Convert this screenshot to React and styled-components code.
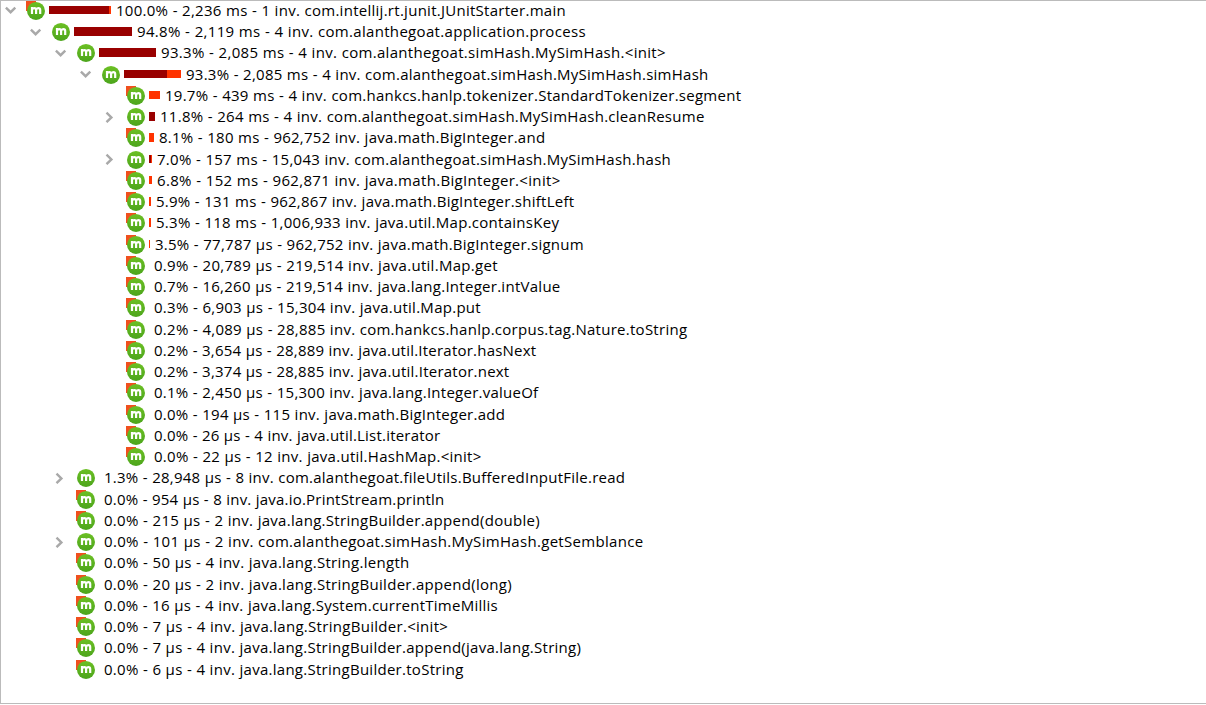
import React from 'react';
import styled, { createGlobalStyle } from 'styled-components';

const rows = [
  { depth: 0, arrow: 'open', flag: true, own: 60, native: 2, text: '100.0% - 2,236 ms - 1 inv. com.intellij.rt.junit.JUnitStarter.main' },
  { depth: 1, arrow: 'open', own: 58, tracking: 0.32, text: '94.8% - 2,119 ms - 4 inv. com.alanthegoat.application.process' },
  { depth: 2, arrow: 'open', own: 57, tracking: 0.31, text: '93.3% - 2,085 ms - 4 inv. com.alanthegoat.simHash.MySimHash.<init>' },
  { depth: 3, arrow: 'open', own: 43, native: 14, tracking: 0.25, text: '93.3% - 2,085 ms - 4 inv. com.alanthegoat.simHash.MySimHash.simHash' },
  { depth: 4, flag: true, native: 11, tracking: 0.26, text: '19.7% - 439 ms - 4 inv. com.hankcs.hanlp.tokenizer.StandardTokenizer.segment' },
  { depth: 4, arrow: 'closed', own: 6, text: '11.8% - 264 ms - 4 inv. com.alanthegoat.simHash.MySimHash.cleanResume' },
  { depth: 4, flag: true, native: 5, tracking: 0.25, text: '8.1% - 180 ms - 962,752 inv. java.math.BigInteger.and' },
  { depth: 4, arrow: 'closed', own: 2, native: 1, text: '7.0% - 157 ms - 15,043 inv. com.alanthegoat.simHash.MySimHash.hash' },
  { depth: 4, flag: true, native: 3, tracking: 0.32, text: '6.8% - 152 ms - 962,871 inv. java.math.BigInteger.<init>' },
  { depth: 4, flag: true, native: 2, tracking: 0.25, text: '5.9% - 131 ms - 962,867 inv. java.math.BigInteger.shiftLeft' },
  { depth: 4, flag: true, native: 2, text: '5.3% - 118 ms - 1,006,933 inv. java.util.Map.containsKey' },
  { depth: 4, flag: true, native: 1, tracking: 0.25, text: '3.5% - 77,787 µs - 962,752 inv. java.math.BigInteger.signum' },
  { depth: 4, flag: true, tracking: 0.29, text: '0.9% - 20,789 µs - 219,514 inv. java.util.Map.get' },
  { depth: 4, flag: true, text: '0.7% - 16,260 µs - 219,514 inv. java.lang.Integer.intValue' },
  { depth: 4, flag: true, text: '0.3% - 6,903 µs - 15,304 inv. java.util.Map.put' },
  { depth: 4, flag: true, text: '0.2% - 4,089 µs - 28,885 inv. com.hankcs.hanlp.corpus.tag.Nature.toString' },
  { depth: 4, flag: true, tracking: 0.22, text: '0.2% - 3,654 µs - 28,889 inv. java.util.Iterator.hasNext' },
  { depth: 4, flag: true, tracking: 0.23, text: '0.2% - 3,374 µs - 28,885 inv. java.util.Iterator.next' },
  { depth: 4, flag: true, tracking: 0.25, text: '0.1% - 2,450 µs - 15,300 inv. java.lang.Integer.valueOf' },
  { depth: 4, flag: true, tracking: 0.25, text: '0.0% - 194 µs - 115 inv. java.math.BigInteger.add' },
  { depth: 4, flag: true, tracking: 0.21, text: '0.0% - 26 µs - 4 inv. java.util.List.iterator' },
  { depth: 4, flag: true, text: '0.0% - 22 µs - 12 inv. java.util.HashMap.<init>' },
  { depth: 2, arrow: 'closed', tracking: 0.24, text: '1.3% - 28,948 µs - 8 inv. com.alanthegoat.fileUtils.BufferedInputFile.read' },
  { depth: 2, flag: true, tracking: 0.21, text: '0.0% - 954 µs - 8 inv. java.io.PrintStream.println' },
  { depth: 2, flag: true, tracking: 0.29, text: '0.0% - 215 µs - 2 inv. java.lang.StringBuilder.append(double)' },
  { depth: 2, arrow: 'closed', tracking: 0.31, text: '0.0% - 101 µs - 2 inv. com.alanthegoat.simHash.MySimHash.getSemblance' },
  { depth: 2, flag: true, tracking: 0.29, text: '0.0% - 50 µs - 4 inv. java.lang.String.length' },
  { depth: 2, flag: true, tracking: 0.29, text: '0.0% - 20 µs - 2 inv. java.lang.StringBuilder.append(long)' },
  { depth: 2, flag: true, tracking: 0.25, text: '0.0% - 16 µs - 4 inv. java.lang.System.currentTimeMillis' },
  { depth: 2, flag: true, tracking: 0.29, text: '0.0% - 7 µs - 4 inv. java.lang.StringBuilder.<init>' },
  { depth: 2, flag: true, text: '0.0% - 7 µs - 4 inv. java.lang.StringBuilder.append(java.lang.String)' },
  { depth: 2, flag: true, text: '0.0% - 6 µs - 4 inv. java.lang.StringBuilder.toString' },
];

const Arrow = ({ state }) => (
  <ArrowSlot>
    {state && (
      <svg width="12" height="12" viewBox="0 0 12 12" fill="none" stroke="#a9a9a9" strokeWidth="2.4">
        <path d={state === 'open' ? 'M0.9 3.6 L5.6 8.2 L10.3 3.6' : 'M1.5 1.6 L6.4 6.4 L1.5 11.2'} />
      </svg>
    )}
  </ArrowSlot>
);

const MethodIcon = ({ flag }) => (
  <IconSvg width="20" height="20" viewBox="0 0 20 20">
    <defs>
      <linearGradient id="method-green" x1="0" y1="0" x2="0" y2="1">
        <stop offset="0" stopColor="#6cc024" />
        <stop offset="1" stopColor="#4ca51c" />
      </linearGradient>
    </defs>
    {flag && <path d="M0 0 H10 V10 H0 Z" fill="#f0501e" />}
    <circle cx="10" cy="9.9" r="9" fill="url(#method-green)" />
    <path
      d="M6 13 V6 M6 8.8 Q6.4 7.1 8.2 7.1 Q10.1 7.1 10.1 9 V13 M10.1 8.8 Q10.5 7.1 12.3 7.1 Q14.2 7.1 14.2 9 V13"
      fill="none"
      stroke="#fff"
      strokeWidth="2.2"
    />
  </IconSvg>
);

const TreeRow = ({ row }) => (
  <Row $depth={row.depth}>
    <Arrow state={row.arrow} />
    <MethodIcon flag={row.flag} />
    <Bar>
      <BarPart $color="#990000" style={{ width: row.own || 0 }} />
      <BarPart $color="#ff3300" style={{ width: row.native || 0 }} />
    </Bar>
    <Label $tracking={row.tracking}>{row.text}</Label>
  </Row>
);

const App = () => (
  <>
    <GlobalStyle />
    <Panel>
      {rows.map((row) => (
        <TreeRow key={row.text} row={row} />
      ))}
    </Panel>
  </>
);

const GlobalStyle = createGlobalStyle`
  body {
    margin: 0;
    background: #fff;
    overflow: hidden;
  }
`;

const Panel = styled.div`
  box-sizing: border-box;
  height: 704px;
  border: 1px solid #bbb;
  border-right: none;
  background: #fff;
`;

const Row = styled.div`
  display: flex;
  align-items: center;
  height: 21.26px;
  padding-left: ${({ $depth }) => $depth * 25}px;

  &:first-child {
    margin-top: -1.3px;
  }

  svg {
    display: block;
    flex: none;
  }
`;

const ArrowSlot = styled.div`
  width: 21px;
  padding-left: 4px;
  flex: none;
`;

const IconSvg = styled.svg`
  margin-top: 1px;
`;

const Bar = styled.div`
  display: flex;
  height: 8.4px;
  margin: 0 5px 0.3px 3px;
`;

const BarPart = styled.div`
  background: ${({ $color }) => $color};
`;

const Label = styled.span`
  font-family: 'Open Sans', 'Noto Sans', sans-serif;
  font-size: 15px;
  line-height: 21px;
  letter-spacing: ${({ $tracking = 0.27 }) => $tracking}px;
  word-spacing: 0.2px;
  color: #000;
  white-space: pre;
`;

export default App;
